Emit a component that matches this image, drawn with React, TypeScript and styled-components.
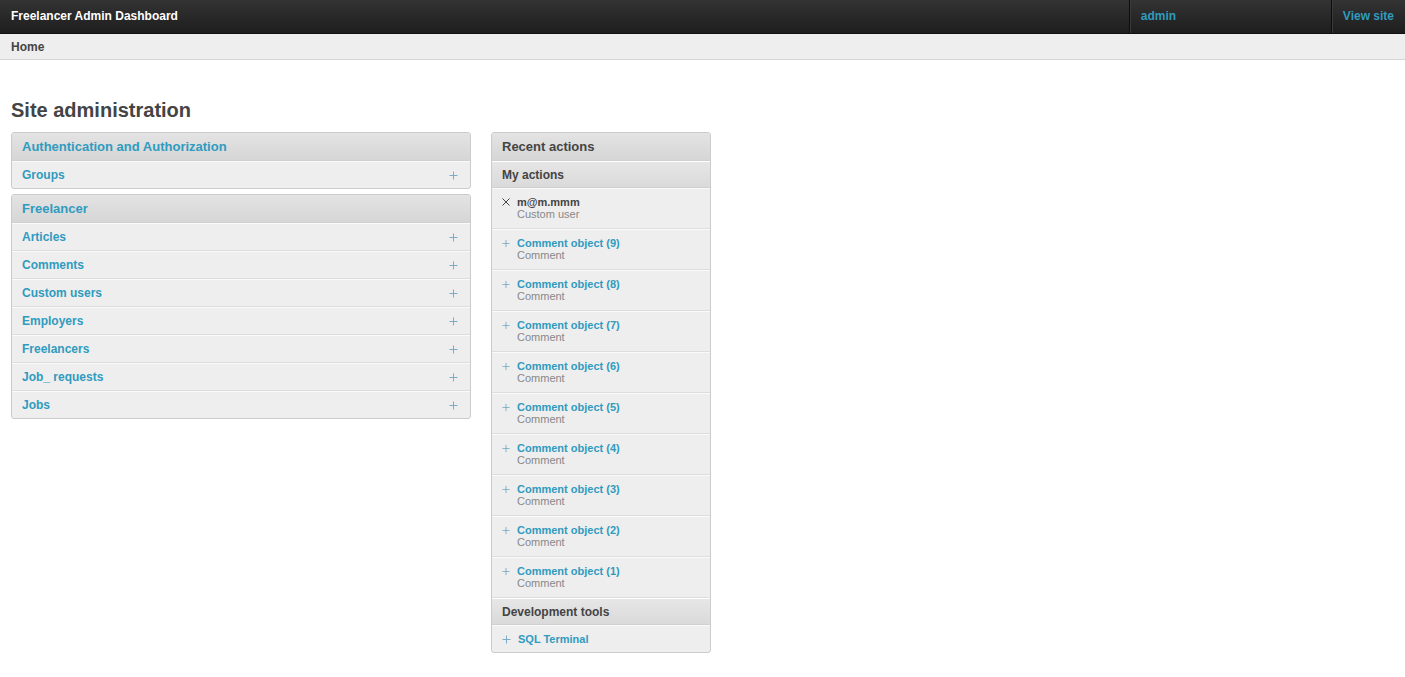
import styled, { createGlobalStyle } from 'styled-components'

const BLUE = '#309bbf'

const Global = createGlobalStyle`
    html, body {
        margin: 0;
        padding: 0;
        background: #fff;
        font-family: "Liberation Sans", Arial, sans-serif;
        font-size: 12px;
        color: #444;
    }
`

const Header = styled.div`
    display: flex;
    align-items: stretch;
    height: 33px;
    background: linear-gradient(to bottom, #333 0%, #1e1e1e 100%);
    border-bottom: 1px solid #111;
`

const Brand = styled.div`
    flex: 1;
    display: flex;
    align-items: center;
    padding: 0 0 1px 11px;
    color: #fff;
    font-weight: bold;
    font-size: 12px;
`

const NavCell = styled.a<{ $width?: number }>`
    display: flex;
    align-items: center;
    width: ${(p) => (p.$width ? `${p.$width}px` : 'auto')};
    padding: 0 11px 1px;
    box-sizing: border-box;
    border-left: 1px solid #0d0d0d;
    box-shadow: inset 1px 0 0 #3a3a3a;
    color: ${BLUE};
    font-weight: bold;
    text-decoration: none;
`

const Breadcrumbs = styled.div`
    height: 25px;
    display: flex;
    align-items: center;
    padding-left: 11px;
    background: #eee;
    border-bottom: 1px solid #d4d4d4;
    font-weight: bold;
    color: #444;
`

const Content = styled.div`
    padding: 37px 11px 20px;
`

const Title = styled.h1`
    margin: 0 0 9px;
    font-size: 20px;
    line-height: 26px;
    font-weight: bold;
    color: #444;
`

const Columns = styled.div`
    display: flex;
    align-items: flex-start;
    gap: 20px;
`

const Column = styled.div<{ $width: number }>`
    width: ${(p) => p.$width}px;
    display: flex;
    flex-direction: column;
    gap: 5px;
`

const Module = styled.div`
    border: 1px solid #ccc;
    border-radius: 3px;
    background: #eee;
    overflow: hidden;
`

const Caption = styled.div<{ $link?: boolean }>`
    height: 27px;
    display: flex;
    align-items: center;
    padding: 0 10px;
    background: linear-gradient(to bottom, #e3e3e3 0%, #d6d6d6 100%);
    border-bottom: 1px solid #d0d0d0;
    font-size: 13px;
    font-weight: bold;
    color: ${(p) => (p.$link ? BLUE : '#444')};
`

const SubCaption = styled(Caption)`
    height: 25px;
    font-size: 12px;
    border-top: 1px solid #fff;
    background: linear-gradient(to bottom, #e6e6e6 0%, #dadada 100%);
`

const Row = styled.div`
    height: 26px;
    display: flex;
    align-items: center;
    justify-content: space-between;
    padding: 0 12px 0 10px;
    border-top: 1px solid #fafafa;
    border-bottom: 1px solid #ddd;
    &:last-child {
        border-bottom: 0;
    }
    a {
        color: ${BLUE};
        font-weight: bold;
        text-decoration: none;
    }
`

const Action = styled.div`
    display: flex;
    align-items: flex-start;
    gap: 7px;
    height: 41px;
    padding: 7px 10px 0;
    box-sizing: border-box;
    border-top: 1px solid #fafafa;
    border-bottom: 1px solid #ddd;
    font-size: 11px;
    line-height: 12px;
`

const ActionIcon = styled.span`
    width: 8px;
    padding-top: 2px;
    display: flex;
`

const ActionTitle = styled.div<{ $deleted?: boolean }>`
    font-weight: bold;
    color: ${(p) => (p.$deleted ? '#444' : BLUE)};
`

const ActionType = styled.div`
    color: #888;
`

const ToolRow = styled(Row)`
    justify-content: flex-start;
    gap: 7px;
    font-size: 11px;
`

const Plus = ({ color = '#7aaec6' }: { color?: string }) => (
    <svg width="9" height="9" viewBox="0 0 9 9">
        <path d="M4.5 0.5v8M0.5 4.5h8" stroke={color} strokeWidth="1" fill="none" />
    </svg>
)

const Cross = () => (
    <svg width="8" height="8" viewBox="0 0 8 8">
        <path d="M0.5 0.5l7 7M7.5 0.5l-7 7" stroke="#444" strokeWidth="1" fill="none" />
    </svg>
)

const freelancerModels = ['Articles', 'Comments', 'Custom users', 'Employers', 'Freelancers', 'Job_ requests', 'Jobs']
const comments = [9, 8, 7, 6, 5, 4, 3, 2, 1]

export default function App() {
    return (
        <>
            <Global />
            <Header>
                <Brand>Freelancer Admin Dashboard</Brand>
                <NavCell $width={202}>admin</NavCell>
                <NavCell>View site</NavCell>
            </Header>
            <Breadcrumbs>Home</Breadcrumbs>
            <Content>
                <Title>Site administration</Title>
                <Columns>
                    <Column $width={460}>
                        <Module>
                            <Caption $link>Authentication and Authorization</Caption>
                            <Row>
                                <a>Groups</a>
                                <Plus />
                            </Row>
                        </Module>
                        <Module>
                            <Caption $link>Freelancer</Caption>
                            {freelancerModels.map((m) => (
                                <Row key={m}>
                                    <a>{m}</a>
                                    <Plus />
                                </Row>
                            ))}
                        </Module>
                    </Column>
                    <Column $width={220}>
                        <Module>
                            <Caption>Recent actions</Caption>
                            <SubCaption>My actions</SubCaption>
                            <Action>
                                <ActionIcon>
                                    <Cross />
                                </ActionIcon>
                                <div>
                                    <ActionTitle $deleted>m@m.mmm</ActionTitle>
                                    <ActionType>Custom user</ActionType>
                                </div>
                            </Action>
                            {comments.map((n) => (
                                <Action key={n}>
                                    <ActionIcon>
                                        <Plus />
                                    </ActionIcon>
                                    <div>
                                        <ActionTitle>Comment object ({n})</ActionTitle>
                                        <ActionType>Comment</ActionType>
                                    </div>
                                </Action>
                            ))}
                            <SubCaption>Development tools</SubCaption>
                            <ToolRow>
                                <Plus />
                                <a>SQL Terminal</a>
                            </ToolRow>
                        </Module>
                    </Column>
                </Columns>
            </Content>
        </>
    )
}
